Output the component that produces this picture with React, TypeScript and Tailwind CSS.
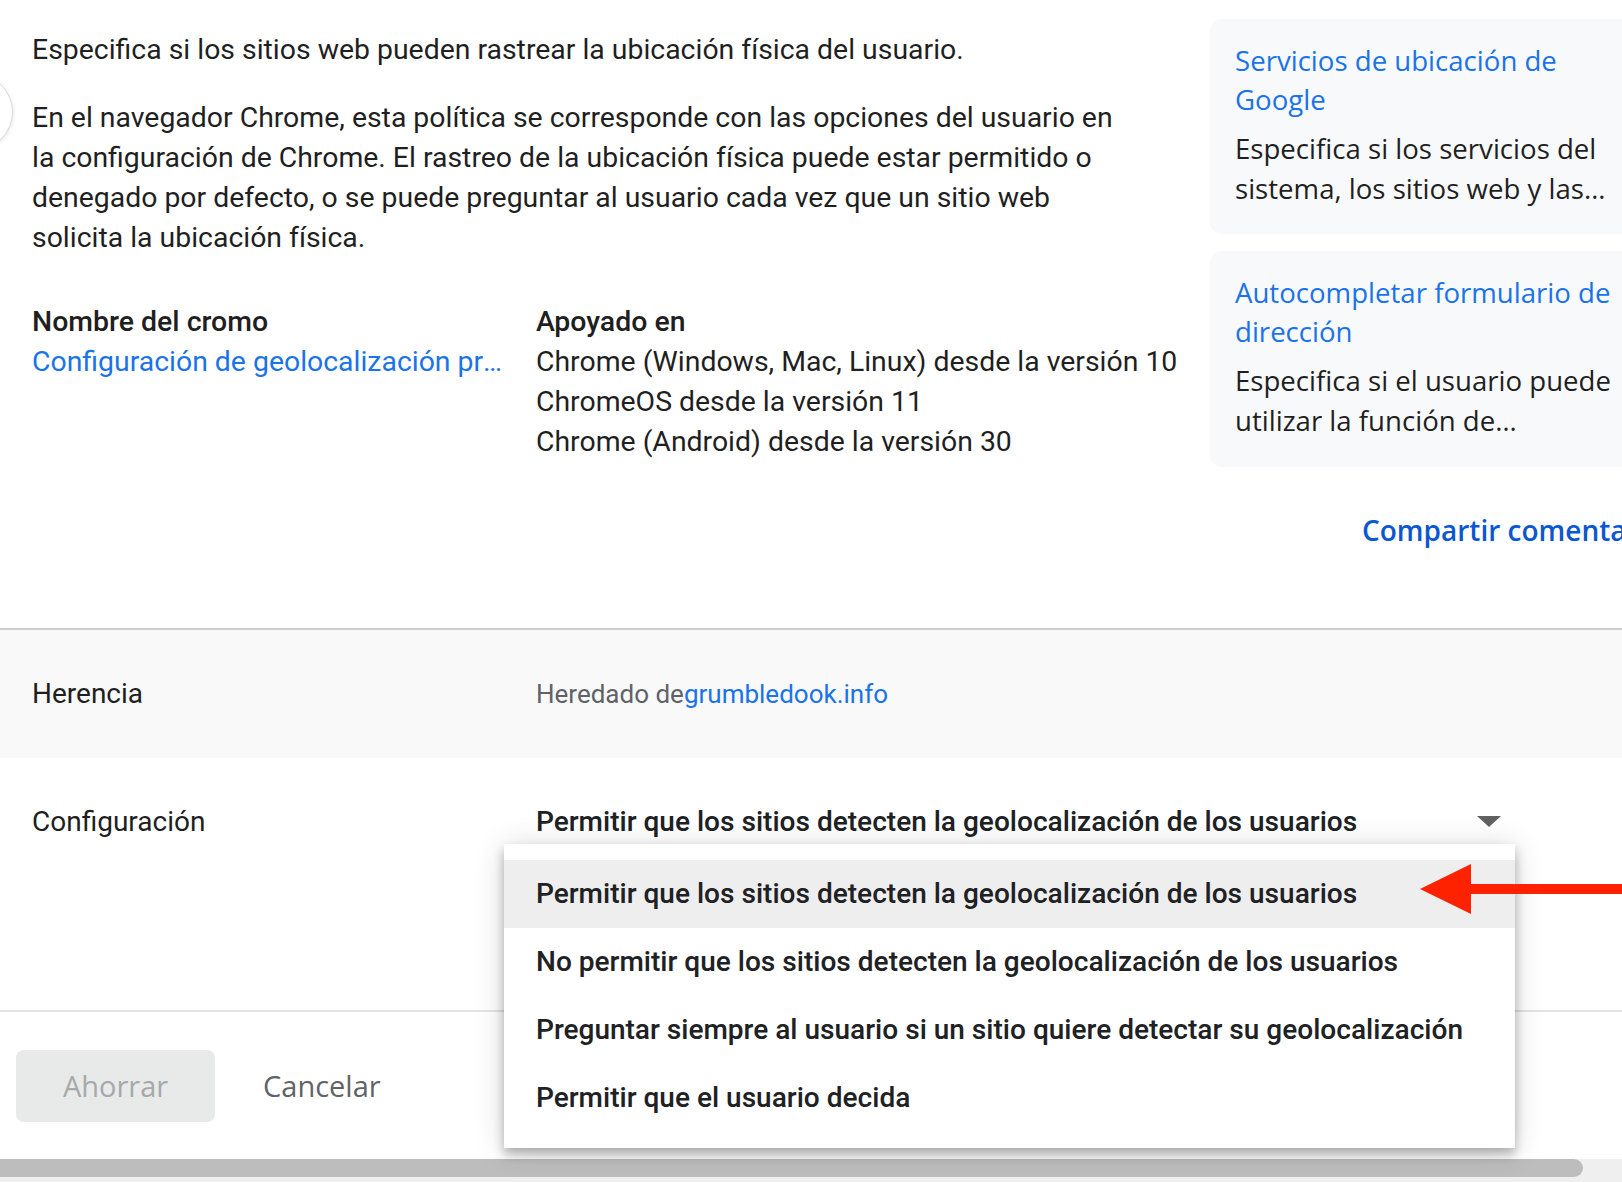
export default function App() {
  return (
    <div className="relative w-[1622px] h-[1182px] overflow-hidden bg-white text-[#1f1f1f] flex flex-col font-['Roboto',sans-serif]">
      {/* Top section */}
      <div className="flex h-[628px] shrink-0">
        <div className="w-[1210px] shrink-0 pl-[32px] pt-[30px]">
          <p className="text-[28.4px] leading-[40px]">
            Especifica si los sitios web pueden rastrear la ubicación física del usuario.
          </p>
          <p className="mt-[28px] text-[28.4px] leading-[40px] w-[1098px]">
            En el navegador Chrome, esta política se corresponde con las opciones del usuario en la configuración de Chrome. El rastreo de la ubicación física puede estar permitido o denegado por defecto, o se puede preguntar al usuario cada vez que un sitio web solicita la ubicación física.
          </p>
          <div className="mt-[44px] grid grid-cols-[504px_1fr] text-[28.4px] leading-[40px]">
            <div>
              <div className="font-['Roboto_Medium','Roboto',sans-serif] font-medium">Nombre del cromo</div>
              <div className="text-[#1a73e8] truncate w-[478px]">
                Configuración de geolocalización predeterminada
              </div>
            </div>
            <div>
              <div className="font-['Roboto_Medium','Roboto',sans-serif] font-medium">Apoyado en</div>
              <div className="whitespace-nowrap">Chrome (Windows, Mac, Linux) desde la versión 10</div>
              <div>ChromeOS desde la versión 11</div>
              <div>Chrome (Android) desde la versión 30</div>
            </div>
          </div>
        </div>
        <div className="shrink-0 w-[440px] pt-[19px] flex flex-col font-['Open_Sans',sans-serif]">
          <div className="h-[215px] rounded-[12px] bg-[#f8f9fa] pl-[25px] pr-[16px] pt-[22px]">
            <div className="text-[27.6px] leading-[39px] text-[#1a73e8]">Servicios de ubicación de Google</div>
            <div className="mt-[9px] text-[27.6px] leading-[40px] text-[#1f1f1f] line-clamp-2">
              Especifica si los servicios del sistema, los sitios web y las aplicaciones pueden usar la ubicación
            </div>
          </div>
          <div className="mt-[17px] h-[216px] rounded-[12px] bg-[#f8f9fa] pl-[25px] pr-[16px] pt-[22px]">
            <div className="text-[27.6px] leading-[39px] text-[#1a73e8]">Autocompletar formulario de dirección</div>
            <div className="mt-[9px] text-[27.6px] leading-[40px] text-[#1f1f1f] line-clamp-2">
              Especifica si el usuario puede utilizar la función de autocompletar direcciones
            </div>
          </div>
          <div className="mt-[43px] pl-[152px] text-[28px] leading-[40px] font-semibold text-[#0b57d0] whitespace-nowrap">
            Compartir comentarios
          </div>
        </div>
      </div>

      <div className="h-[2px] shrink-0 bg-[#cfcfcf]" />

      {/* Herencia */}
      <div className="h-[128px] shrink-0 bg-[#f9f9f9] flex items-center leading-[40px]">
        <div className="w-[536px] pl-[32px] shrink-0 text-[28px]">Herencia</div>
        <div className="text-[26px] text-[#5f6368]">
          Heredado de<span className="text-[#1a73e8]">grumbledook.info</span>
        </div>
      </div>

      {/* Configuración */}
      <div className="h-[252px] shrink-0 pt-[44px] flex items-start text-[28px] leading-[40px]">
        <div className="w-[536px] pl-[32px] shrink-0">Configuración</div>
        <div className="w-[965px] h-[40px] flex items-center justify-between">
          <span className="font-['Roboto_Medium','Roboto',sans-serif] font-medium text-[#202124] whitespace-nowrap">
            Permitir que los sitios detecten la geolocalización de los usuarios
          </span>
          <svg width="24" height="12" viewBox="0 0 24 12" className="shrink-0">
            <polygon points="0,0 24,0 12,11" fill="#616161" />
          </svg>
        </div>
      </div>

      <div className="h-[2px] shrink-0 bg-[#e3e3e3]" />

      {/* Buttons */}
      <div className="pt-[38px] pl-[16px] flex items-center gap-[48px] font-['Open_Sans',sans-serif] text-[29px]">
        <div className="w-[199px] h-[72px] rounded-[8px] bg-[#e8eaea] text-[#a6a8a9] flex items-center justify-center">
          Ahorrar
        </div>
        <div className="text-[#5f6368]">Cancelar</div>
      </div>

      {/* Scrollbar */}
      <div className="mt-auto h-[23px] shrink-0 bg-[#efefef]">
        <div className="w-[1583px] h-[18px] bg-[#bdbdbd] rounded-r-full" />
      </div>

      {/* Left round button edge */}
      <div className="absolute left-[-63px] top-[74px] w-[76px] h-[76px] rounded-full bg-white border border-[#dadada] shadow-[0_1px_4px_rgba(0,0,0,0.12)]" />

      {/* Dropdown menu */}
      <div className="absolute left-[504px] top-[844px] w-[1011px] py-[16px] bg-white shadow-[0_6px_10px_rgba(0,0,0,0.28),0_2px_30px_rgba(0,0,0,0.14)] text-[28px] leading-[40px] font-['Roboto_Medium','Roboto',sans-serif] font-medium text-[#202124]">
        <div className="h-[68px] flex items-center pl-[32px] bg-[#eeeeee] whitespace-nowrap">
          Permitir que los sitios detecten la geolocalización de los usuarios
        </div>
        <div className="h-[68px] flex items-center pl-[32px] whitespace-nowrap">
          No permitir que los sitios detecten la geolocalización de los usuarios
        </div>
        <div className="h-[68px] flex items-center pl-[32px] whitespace-nowrap">
          Preguntar siempre al usuario si un sitio quiere detectar su geolocalización
        </div>
        <div className="h-[68px] flex items-center pl-[32px] whitespace-nowrap">Permitir que el usuario decida</div>
      </div>

      {/* Red arrow */}
      <svg className="absolute left-[1420px] top-[862px]" width="202" height="54" viewBox="0 0 202 54">
        <polygon points="0,27 51,2 51,52" fill="#ff2200" />
        <rect x="50" y="22" width="152" height="10" fill="#ff2200" />
      </svg>
    </div>
  );
}
